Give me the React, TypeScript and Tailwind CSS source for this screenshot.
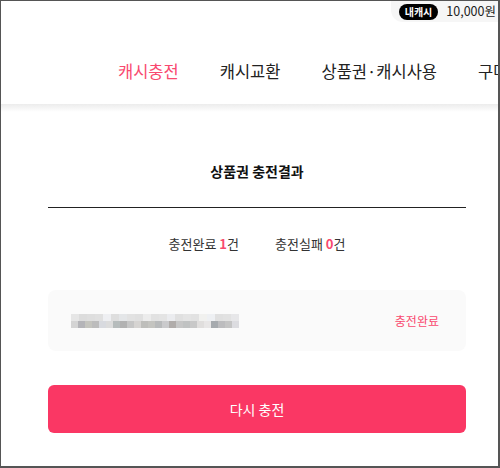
import React from "react";

const FONT = { fontFamily: '"Noto Sans CJK KR", "Noto Sans", sans-serif' };

// pixelated card number (blurred in the original)
const TOP_ROW = ["#e6e6e6", "#dcdcdc", "#dedede", "#e0e0e0", "#eeeff2", "#dedede", "#e4e6e8", "#e2e2e2", "#e0e0e0", "#ececec", "#e2e2e2", "#e4e4e4", "#ebecef", "#e0e0e0", "#e4e4e4", "#e2e2e2", "#f1f1ef", "#eef0f3", "#e0e0e0", "#e2e2e2", "#e7e7e9"];
const BOTTOM_ROW = ["#d4d4d4", "#b4b4b8", "#c4c4be", "#bcbcbc", "#d8dadf", "#dcdcdc", "#b6bcbc", "#b2b2b2", "#c6c6c6", "#d6d4d2", "#bebebb", "#c4c4c0", "#b8babb", "#cacacc", "#b0acaa", "#c6c6c6", "#c0c2c2", "#c8c8c8", "#e0dedd", "#e8e6e6", "#a6aaae", "#bcbcbe", "#c4c4c4", "#dcdce0"];

function Mosaic() {
  return (
    <div className="flex flex-col">
      <div className="flex">
        {TOP_ROW.map((c, i) => (
          <div key={i} className="w-2 h-[7px]" style={{ background: c }} />
        ))}
      </div>
      <div className="flex">
        {BOTTOM_ROW.map((c, i) => (
          <div key={i} className="w-[7px] h-[7px]" style={{ background: c }} />
        ))}
      </div>
    </div>
  );
}

export default function App() {
  return (
    <div className="w-[500px] h-[468px] overflow-hidden border border-r-2 border-b-2 border-[#555] bg-white" style={FONT}>
      {/* Top bar */}
      <div className="flex justify-end">
        <div className="flex items-center gap-2 h-[21px] pl-[8px] pr-[2px] bg-[#f6f6f6] rounded-bl-[12px]">
          <span className="bg-black text-white text-[10px] font-bold leading-none px-[6px] py-[3px] rounded-full">내캐시</span>
          <span className="text-[12.5px] text-[#222] leading-none">10,000원</span>
        </div>
      </div>

      {/* Nav */}
      <div className="h-[82px] flex items-center gap-[41px] pl-[117px] pt-[16px] text-[16.5px] text-[#222] whitespace-nowrap">
        <span className="text-[#f9496f]">캐시충전</span>
        <span>캐시교환</span>
        <span>상품권·캐시사용</span>
        <span>구매내역</span>
      </div>
      <div className="h-[8px] bg-gradient-to-b from-[#ececec] to-white" />

      {/* Content */}
      <div className="w-[418px] ml-[47px] flex flex-col">
        <h2 className="text-[14px] font-bold text-[#111] text-center mt-[49px] leading-[20px]">상품권 충전결과</h2>
        <div className="h-px bg-[#222] mt-[26px]" />
        <div className="flex justify-center gap-[36px] mt-[26px] text-[13px] text-[#333] leading-[20px]">
          <span>충전완료 <b className="text-[#f9496f] font-bold">1</b>건</span>
          <span>충전실패 <b className="text-[#f9496f] font-bold">0</b>건</span>
        </div>
        <div className="mt-[36px] h-[61px] bg-[#fafafa] rounded-[8px] flex items-center justify-between pl-[23px] pr-[27px]">
          <Mosaic />
          <span className="text-[12px] text-[#f9496f]">충전완료</span>
        </div>
        <button className="mt-[34px] h-[48px] bg-[#fa3764] text-white text-[14px] rounded-[6px]">다시 충전</button>
      </div>
    </div>
  );
}
